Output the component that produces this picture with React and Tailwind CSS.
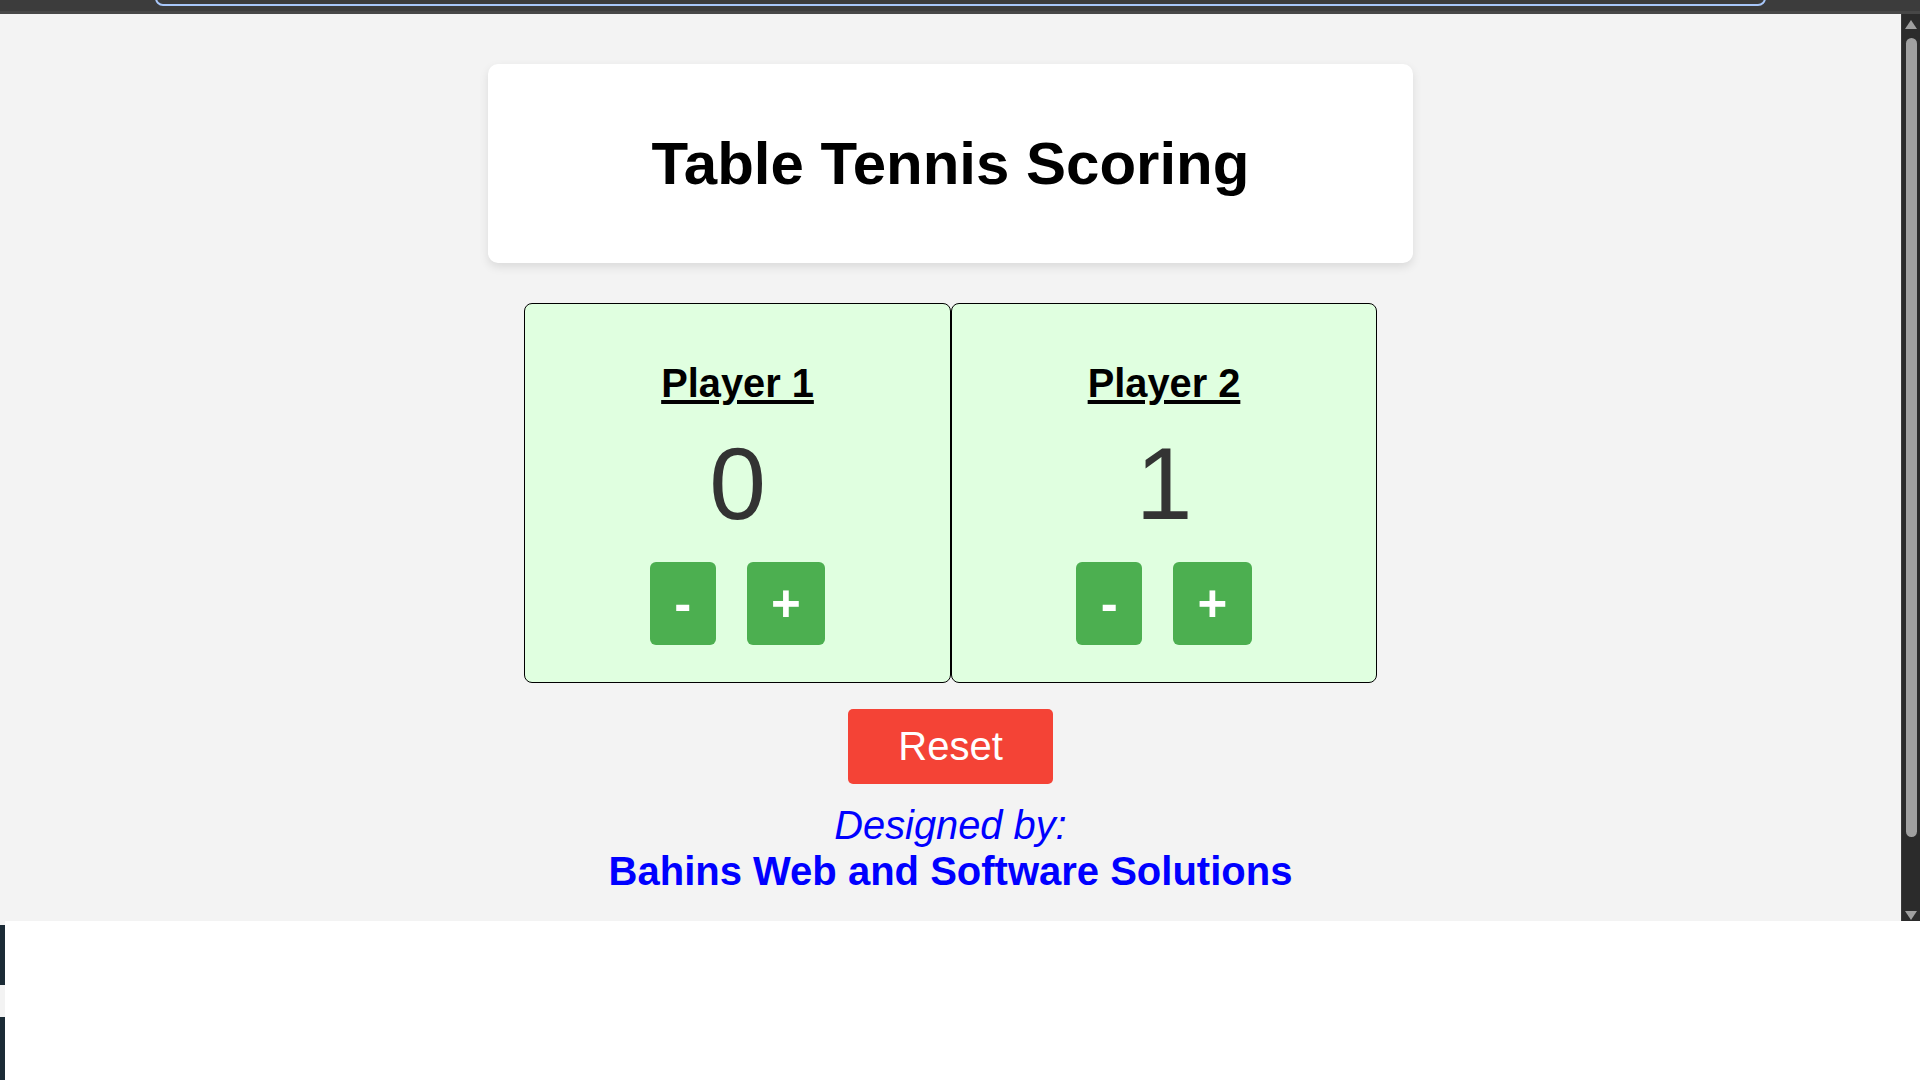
import React, { useState } from "react";

const PlayerCard = ({ name, score, onMinus, onPlus, width }) => (
  <div className={`${width} h-[380px] border border-black rounded-[8px] bg-[#e0ffe0] flex flex-col items-center pt-[57px]`}>
    <h2 className="text-[39.8px] font-bold leading-[45px] text-black underline decoration-[3.5px] underline-offset-[3px]">{name}</h2>
    <div className="mt-[20px] text-[102px] leading-[117px] text-[#333333]">{score}</div>
    <div className="mt-[19px] flex gap-[31px]">
      <button onClick={onMinus} className="bg-[#4caf50] text-white font-bold text-[51px] leading-[59px] px-[24.4px] py-[12px] rounded-[6px]">-</button>
      <button onClick={onPlus} className="bg-[#4caf50] text-white font-bold text-[51px] leading-[59px] px-[24.4px] py-[12px] rounded-[6px]">+</button>
    </div>
  </div>
);

const App = () => {
  const [scores, setScores] = useState([0, 1]);

  const change = (i, d) =>
    setScores((s) => s.map((v, idx) => (idx === i ? Math.max(0, v + d) : v)));

  return (
    <div className="w-[1920px] h-[1080px] flex flex-col bg-white overflow-hidden font-['Liberation_Sans',Arial,sans-serif]">
      {/* browser bar strip */}
      <div className="h-[14px] shrink-0 bg-[#3c3c3c] border-b-[3px] border-[#474747] overflow-hidden flex">
        <div className="ml-[155px] w-[1611px] h-[16px] -mt-[10px] shrink-0 border-2 border-[#a8c7fa] rounded-[14px]"></div>
      </div>

      <div className="h-[907px] shrink-0 flex">
        <div className="flex-1 bg-[#f3f3f3] flex flex-col items-center">
          <div className="mt-[50px] w-[925px] h-[199px] bg-white rounded-[10px] shadow-[0_4px_10px_rgba(0,0,0,0.1)] flex items-center justify-center">
            <h1 className="text-[60px] font-bold leading-[67px] text-black">Table Tennis Scoring</h1>
          </div>

          <div className="mt-[40px] flex">
            <PlayerCard name="Player 1" score={scores[0]} width="w-[427px]" onMinus={() => change(0, -1)} onPlus={() => change(0, 1)} />
            <PlayerCard name="Player 2" score={scores[1]} width="w-[426px]" onMinus={() => change(1, -1)} onPlus={() => change(1, 1)} />
          </div>

          <button
            onClick={() => setScores([0, 0])}
            className="mt-[26px] w-[205px] h-[75px] bg-[#f44336] text-white text-[40px] leading-[45px] rounded-[5px]"
          >
            Reset
          </button>

          <div className="mt-[19px] text-center text-[#0000ff]">
            <div className="italic text-[39.8px] leading-[45px]">Designed by:</div>
            <div className="font-bold text-[40px] leading-[46px]">Bahins Web and Software Solutions</div>
          </div>
        </div>

        {/* scrollbar */}
        <div className="w-[19px] bg-[#2b2b2b] border-l border-[#3a3a3a] flex flex-col items-center">
          <div className="mt-[6px] w-0 h-0 border-x-[6px] border-x-transparent border-b-[9px] border-b-[#9f9f9f]"></div>
          <div className="mt-[9px] w-[11px] h-[799px] rounded-full bg-[#a0a0a0]"></div>
          <div className="mt-auto mb-[1px] w-0 h-0 border-x-[6px] border-x-transparent border-t-[9px] border-t-[#9f9f9f]"></div>
        </div>
      </div>

      <div className="flex-1 flex">
        <div className="w-[5px] flex flex-col">
          <div className="h-[4px] bg-[#f3f3f3]"></div>
          <div className="h-[60px] bg-[#1b2b36]"></div>
          <div className="h-[32px] bg-[#f3f3f3]"></div>
          <div className="flex-1 bg-[#1b2b36]"></div>
        </div>
        <div className="flex-1 bg-white"></div>
      </div>
    </div>
  );
};

export default App;
